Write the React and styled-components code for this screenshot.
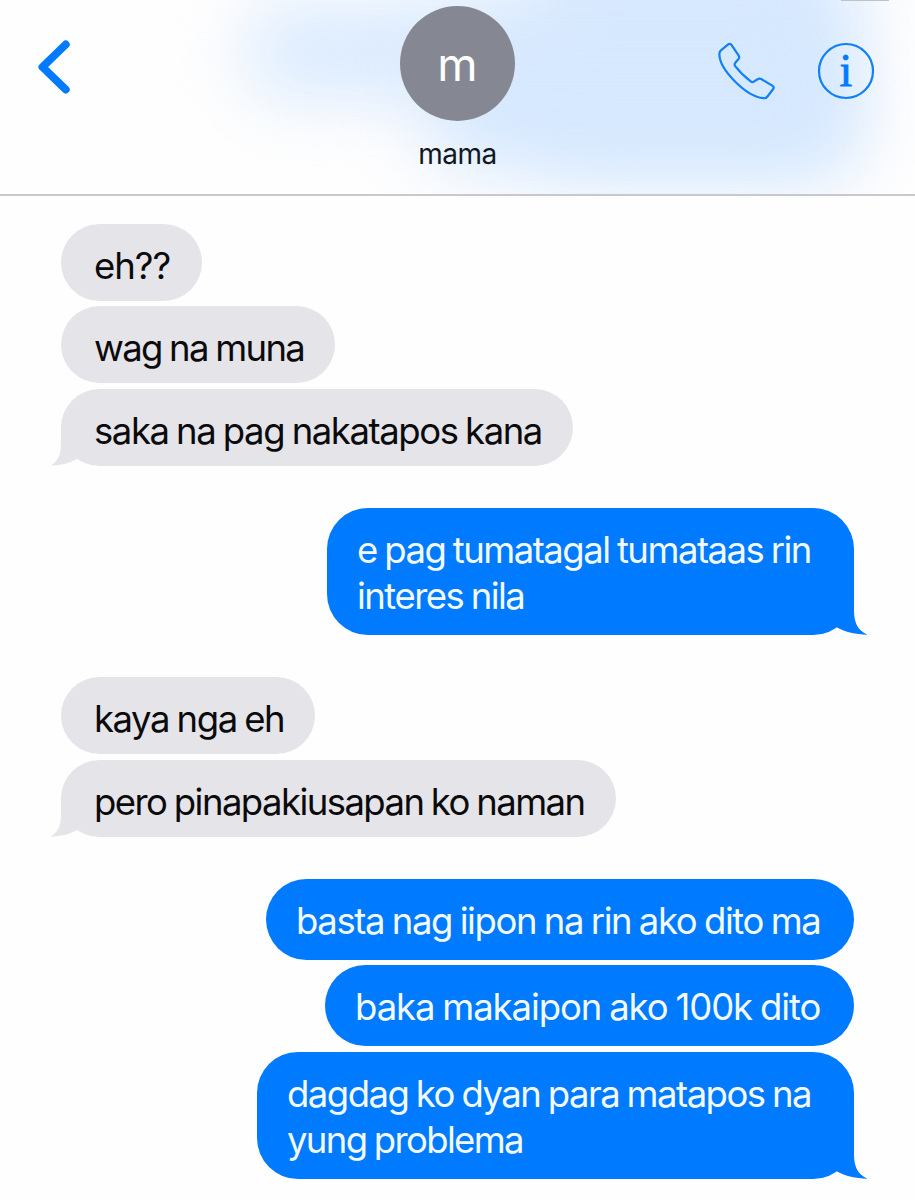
import React from 'react';
import styled, { createGlobalStyle } from 'styled-components';

const GlobalStyle = createGlobalStyle`
  * {
    box-sizing: border-box;
  }
  body {
    margin: 0;
    background: #fefefe;
    font-family: Inter, Roboto, 'Liberation Sans', sans-serif;
  }
`;

const Screen = styled.div`
  width: 915px;
  height: 1200px;
  overflow: hidden;
  background: #fefefe;
`;

const Header = styled.header`
  position: relative;
  display: grid;
  grid-template-columns: 1fr 160px 1fr;
  height: 196px;
  overflow: hidden;
  border-bottom: 2px solid #c9c9cd;
`;

// message bubbles showing through the translucent bar
const Haze = styled.div`
  position: absolute;
  left: ${({ $x }) => $x}px;
  top: ${({ $y }) => $y}px;
  width: ${({ $w }) => $w}px;
  height: ${({ $h }) => $h}px;
  border-radius: 30px;
  background: #d6e8fe;
  filter: blur(36px);
`;

const StatusSliver = styled.div`
  position: absolute;
  top: 0;
  right: 26px;
  width: 48px;
  height: 1px;
  background: #bfc2c8;
`;

const BackButton = styled.div`
  position: relative;
  padding: 39px 0 0 37px;
  svg {
    display: block;
  }
`;

const Contact = styled.div`
  position: relative;
  display: flex;
  flex-direction: column;
  align-items: center;
  padding-top: 6px;
`;

const Avatar = styled.div`
  display: flex;
  align-items: center;
  justify-content: center;
  width: 115px;
  height: 115px;
  border-radius: 50%;
  background: #858892;
  color: #fff;
  font-size: 46px;
  line-height: 46px;
`;

const ContactName = styled.div`
  margin-top: 16px;
  font-size: 28px;
  line-height: 34px;
  letter-spacing: -0.5px;
  color: #111820;
`;

const Actions = styled.div`
  position: relative;
  display: flex;
  justify-content: flex-end;
  align-items: flex-start;
  gap: 40.5px;
  padding: 41px 39px 0 0;
  svg {
    display: block;
  }
`;

const Thread = styled.main`
  display: flex;
  flex-direction: column;
  gap: 42px;
  padding: 27.5px 61px 0;
`;

const Group = styled.section`
  display: flex;
  flex-direction: column;
  gap: ${({ $sent }) => ($sent ? 5.5 : 5.8)}px;
  align-items: ${({ $sent }) => ($sent ? 'flex-end' : 'flex-start')};
`;

const Bubble = styled.div`
  position: relative;
  width: ${({ $width }) => $width}px;
  padding: ${({ $sent }) => ($sent ? '19px 0 16px 30px' : '19px 0 12px 33px')};
  border-radius: ${({ $sent }) => ($sent ? 41 : 39)}px;
  background: ${({ $sent }) => ($sent ? '#007aff' : '#e5e4e9')};
  color: ${({ $sent }) => ($sent ? '#f2faff' : '#0b0b0d')};
`;

const Line = styled.div`
  font-size: 36.5px;
  line-height: 46px;
  word-spacing: -1.3px;
  letter-spacing: ${({ $tracking }) => $tracking}px;
  white-space: pre;
`;

const TailLeft = styled.svg`
  position: absolute;
  left: -11px;
  bottom: 0;
`;

const TailRight = styled.svg`
  position: absolute;
  right: -14px;
  bottom: 0;
`;

const groups = [
  {
    sent: false,
    messages: [
      { width: 141, lines: [['eh??', -1]] },
      { width: 274, lines: [['wag na muna', -1.65]] },
      { width: 512, lines: [['saka na pag nakatapos kana', -1.43]] },
    ],
  },
  {
    sent: true,
    messages: [{ width: 527, lines: [['e pag tumatagal tumataas rin', -1.51], ['interes nila', -1.53]] }],
  },
  {
    sent: false,
    messages: [
      { width: 254, lines: [['kaya nga eh', -1.44]] },
      { width: 555, lines: [['pero pinapakiusapan ko naman', -1.56]] },
    ],
  },
  {
    sent: true,
    messages: [
      { width: 588, lines: [['basta nag iipon na rin ako dito ma', -1.38]] },
      { width: 529, lines: [['baka makaipon ako 100k dito', -1.08]] },
      { width: 597, lines: [['dagdag ko dyan para matapos na', -1.51], ['yung problema', -1.65]] },
    ],
  },
];

const Tail = ({ sent }) =>
  sent ? (
    <TailRight width="44" height="46" viewBox="0 0 44 46">
      <path d="M14 3H30V21C30 33 33 41 43.500 45.700C32 45.500 21 43 13 38.500Z" fill="#007aff" />
    </TailRight>
  ) : (
    <TailLeft width="36" height="46" viewBox="0 0 36 46">
      <path d="M11 4V24C11 35 7.500 42 0.500 45.500C11 45.500 20 43 28 38.500L34 4Z" fill="#e5e4e9" />
    </TailLeft>
  );

const ChevronIcon = () => (
  <svg width="36" height="56" viewBox="0 0 36 56" fill="none" stroke="#007aff" strokeWidth="8" strokeLinecap="round" strokeLinejoin="round">
    <path d="M28.700 5.500L5.500 28L28.700 50.500" />
  </svg>
);

const PhoneIcon = () => (
  <svg width="58" height="60" viewBox="0 0 58 60" fill="none" stroke="#0f80f5" strokeWidth="2.2" strokeLinejoin="round">
    <path d="M10.500 3.200Q12 2.200 13.300 3.700L20.700 14.600Q21.700 16.200 20.700 17.700L17.300 21.800Q16 23.500 17.200 25.200C22 31.500 27.500 36.500 33 40.700Q34.300 41.700 35.800 40.600L39.500 38.300Q41.300 37.100 43.200 38L54.300 44.600Q56.500 46 55.200 48L49.500 55.500Q48 57.500 45.500 57.200C37 56.500 26 49.500 17 40.500C8 31.500 1 20.500 1.400 12.500Q1.600 10.600 3.200 9.200Z" />
  </svg>
);

const InfoIcon = () => (
  <svg width="60" height="60" viewBox="0 0 60 60">
    <circle cx="30" cy="30" r="27" fill="none" stroke="#0f80f5" strokeWidth="2.2" />
    <text x="30" y="45" textAnchor="middle" fontFamily="'Liberation Serif', serif" fontSize="46" fill="#007aff" stroke="#007aff" strokeWidth="0.8">
      i
    </text>
  </svg>
);

const App = () => {
  return (
    <>
      <GlobalStyle />
      <Screen>
        <Header>
          <Haze $x={250} $y={8} $w={330} $h={86} />
          <Haze $x={530} $y={-60} $w={325} $h={225} />
          <Haze $x={430} $y={30} $w={410} $h={138} />
          <StatusSliver />
          <BackButton>
            <ChevronIcon />
          </BackButton>
          <Contact>
            <Avatar>m</Avatar>
            <ContactName>mama</ContactName>
          </Contact>
          <Actions>
            <PhoneIcon />
            <InfoIcon />
          </Actions>
        </Header>
        <Thread>
          {groups.map((group, g) => (
            <Group key={g} $sent={group.sent}>
              {group.messages.map((message, i) => (
                <Bubble key={i} $sent={group.sent} $width={message.width}>
                  {i === group.messages.length - 1 && <Tail sent={group.sent} />}
                  {message.lines.map(([text, tracking]) => (
                    <Line key={text} $tracking={tracking}>
                      {text}
                    </Line>
                  ))}
                </Bubble>
              ))}
            </Group>
          ))}
        </Thread>
      </Screen>
    </>
  );
};

export default App;
